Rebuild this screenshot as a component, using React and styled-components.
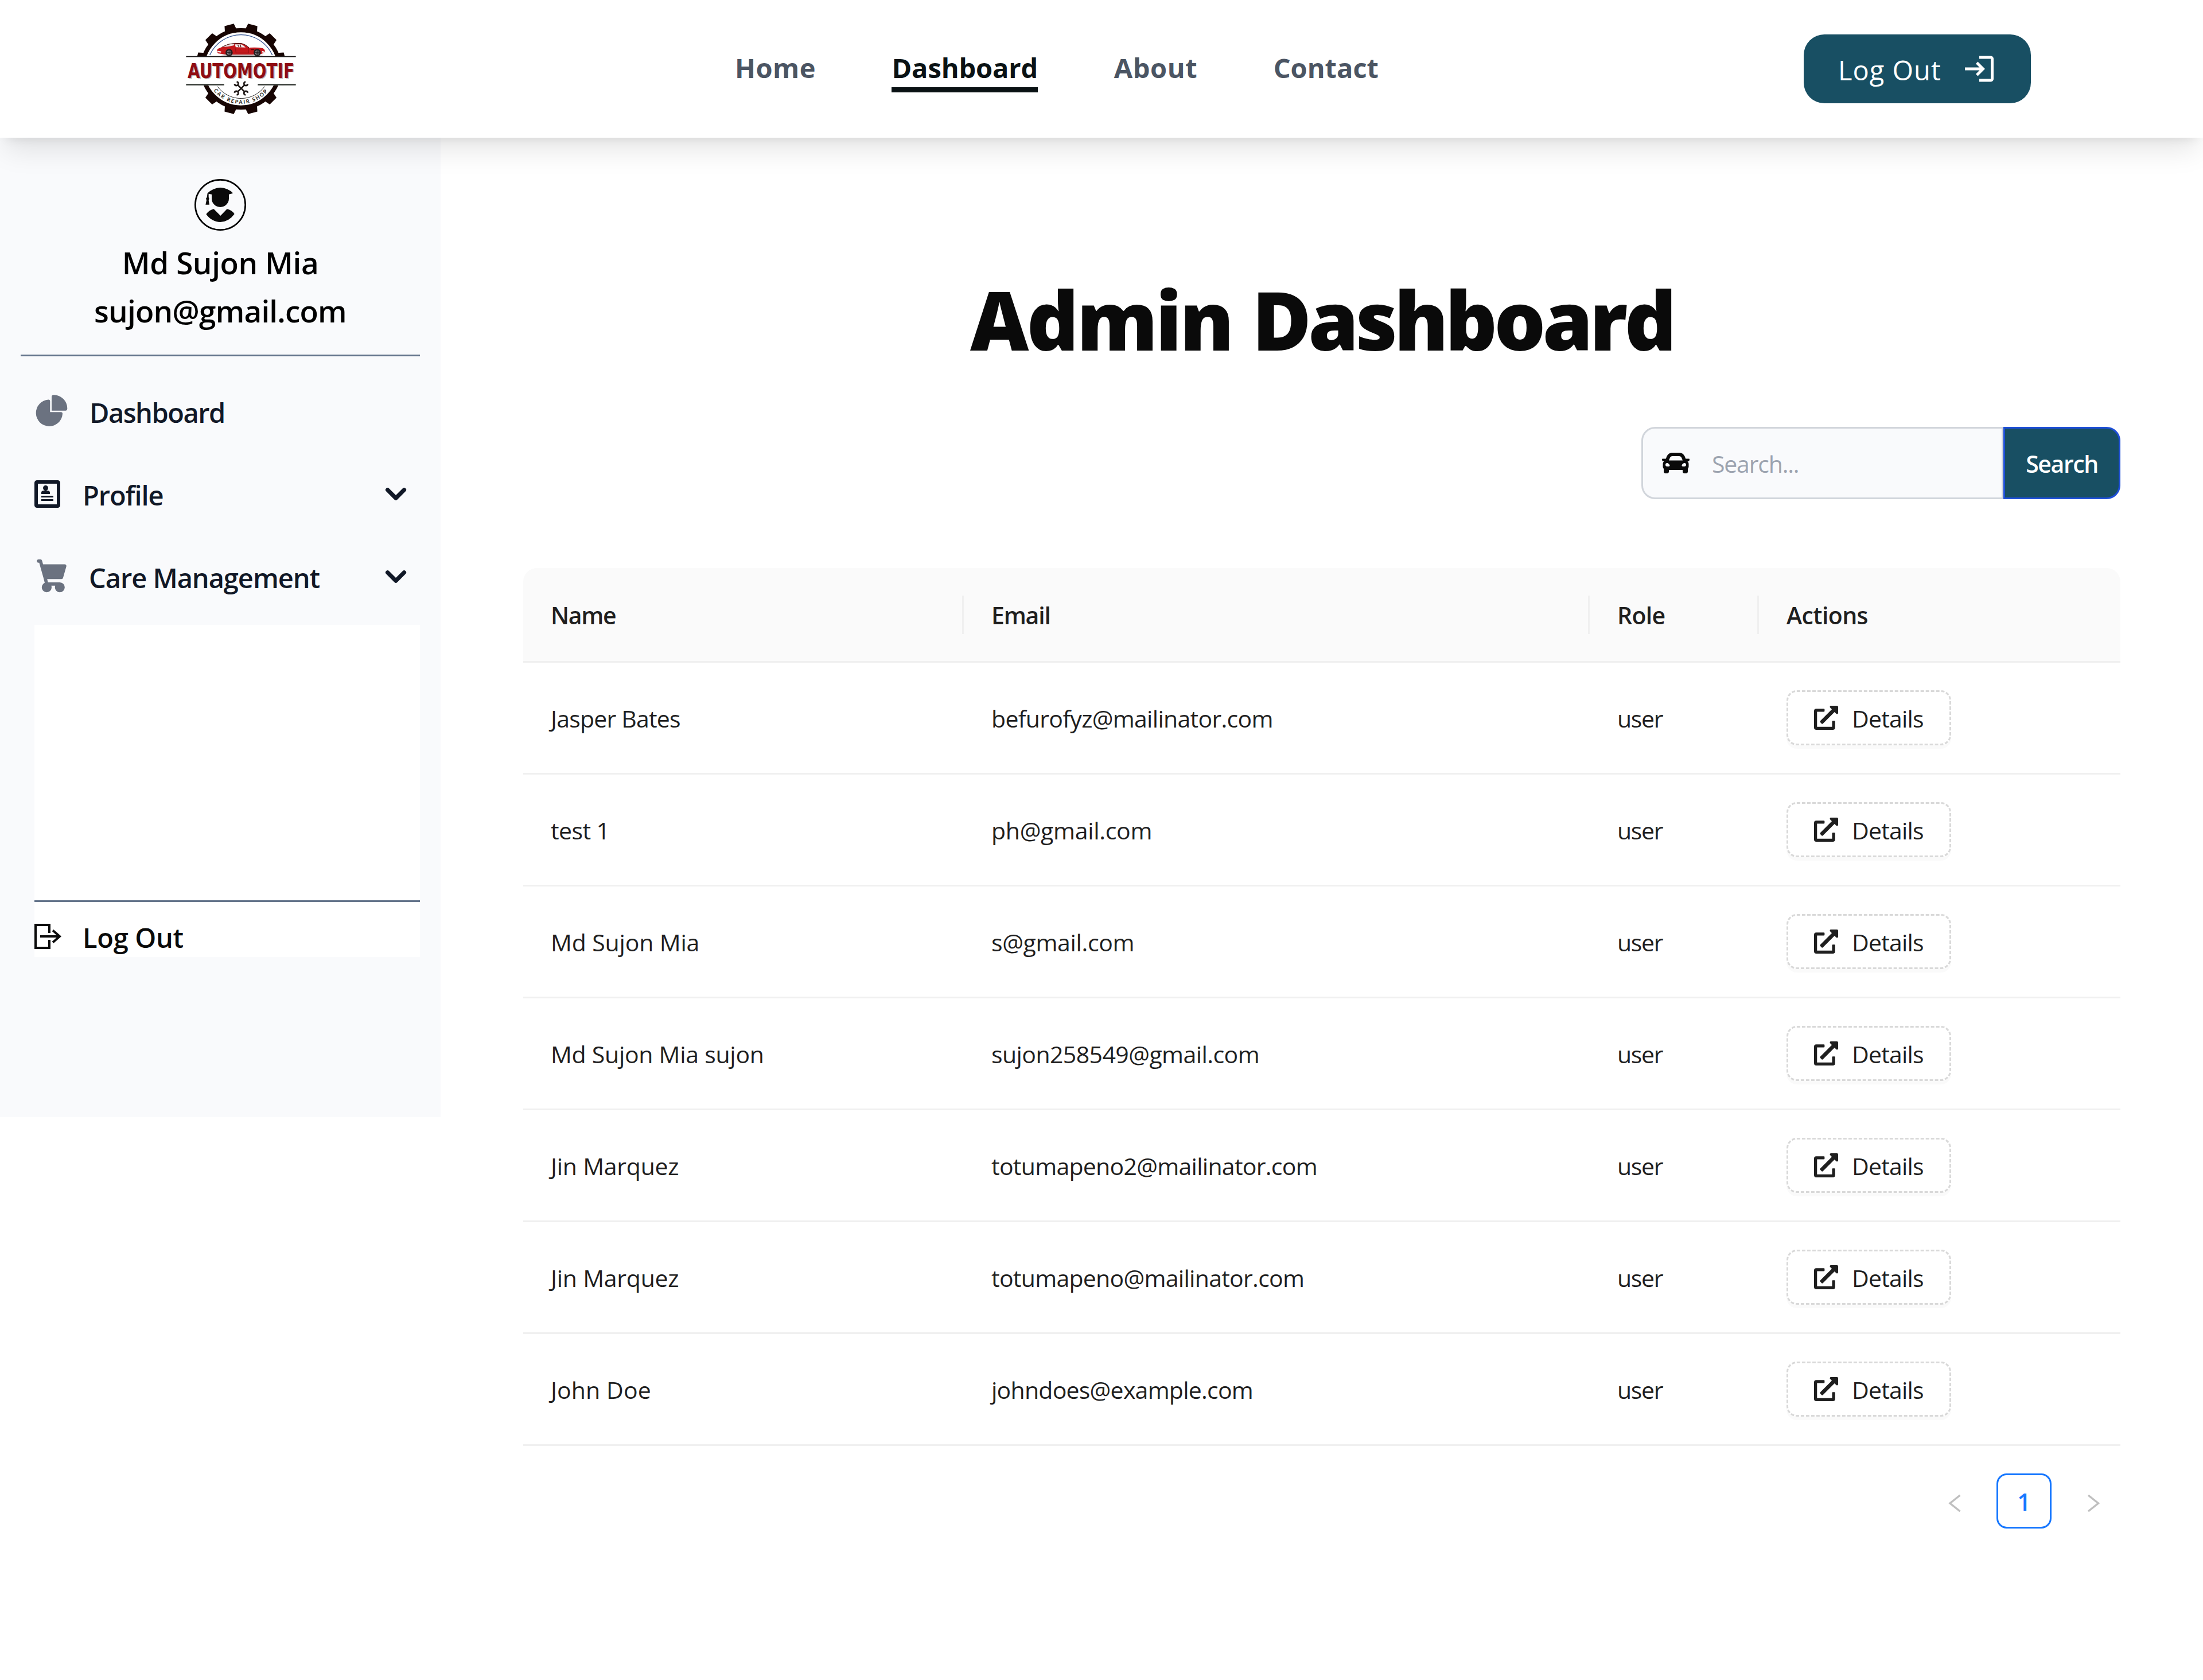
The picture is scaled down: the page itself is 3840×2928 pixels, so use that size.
import React from "react";
import styled, { createGlobalStyle } from "styled-components";
import { MdLogin } from "react-icons/md";
import { ImProfile } from "react-icons/im";
import { FaCar, FaExternalLinkAlt } from "react-icons/fa";

const GlobalStyle = createGlobalStyle`
  *, *::before, *::after { box-sizing: border-box; }
  body {
    margin: 0;
    background: #fff;
    color: #0a0a0a;
    font-family: "Open Sans", "Noto Sans", sans-serif;
  }
  svg { display: block; flex: none; }
`;

const Page = styled.div`
  width: 3840px;
  min-height: 2928px;
  background: #fff;
`;

const Header = styled.header`
  position: relative;
  z-index: 1;
  display: flex;
  align-items: center;
  justify-content: space-between;
  height: 240px;
  padding: 0 300px;
  background: #fff;
  box-shadow: 0 30px 45px -9px rgba(0, 0, 0, 0.1), 0 12px 18px -12px rgba(0, 0, 0, 0.1);
`;

const Nav = styled.nav`
  display: flex;
  justify-content: space-between;
  width: 1122px;
`;

const NavLink = styled.a`
  height: 82px;
  border-bottom: 9px solid ${(p) => (p.$active ? "#0a1214" : "transparent")};
  color: ${(p) => (p.$active ? "#0a1214" : "#4b5563")};
  font-size: 47px;
  font-weight: 700;
  line-height: 78px;
  letter-spacing: ${(p) => p.$ls}px;
`;

const LogoutButton = styled.button`
  display: flex;
  align-items: center;
  justify-content: space-between;
  width: 396px;
  height: 120px;
  padding: 0 60px;
  border: 0;
  border-radius: 36px;
  background: #184f63;
  color: #fff;
  font-family: inherit;
  font-size: 47px;
  letter-spacing: 1px;
  line-height: 72px;

  span { padding-top: 4px; }
`;

const Body = styled.div`
  display: flex;
  align-items: flex-start;
`;

const Sidebar = styled.aside`
  width: 768px;
  height: 1707px;
  padding: 72px 36px 0;
  background: #f9fafc;
`;

const UserCard = styled.div`
  display: flex;
  flex-direction: column;
  align-items: center;
  height: 309px;
  border-bottom: 3px solid #64748b;
`;

const UserLine = styled.div`
  margin-top: ${(p) => p.$top || 0}px;
  color: #000;
  font-size: 53px;
  font-weight: 600;
  line-height: 84px;
  letter-spacing: ${(p) => p.$ls}px;
`;

const Menu = styled.div`
  padding: 24px 0 12px 24px;
`;

const MenuItem = styled.div`
  display: flex;
  align-items: center;
  height: ${(p) => p.$height || 144}px;
  padding-right: 6px;
  color: ${(p) => p.$color || "#111827"};
  font-size: 47px;
  font-weight: 600;
  line-height: 72px;
`;

const MenuLabel = styled.span`
  flex: 1;
  padding-top: 4px;
  margin-left: ${(p) => p.$gap}px;
  letter-spacing: ${(p) => p.$ls}px;
`;

const BottomPanel = styled.div`
  margin-left: 24px;
  padding-top: 480px;
  background: #fff;
`;

const BottomInner = styled.div`
  padding-top: 24px;
  border-top: 3px solid #64748b;
`;

const Main = styled.main`
  flex: 1;
  padding: 244px 144px 0;
`;

const Title = styled.h1`
  margin: 0;
  padding-top: 1px;
  font-size: 141px;
  font-weight: 800;
  line-height: 143px;
  letter-spacing: -5.5px;
  word-spacing: 4px;
  text-align: center;
`;

const TitleLead = styled.span`
  letter-spacing: -3.6px;
`;

const SearchBar = styled.div`
  display: flex;
  width: 835px;
  height: 126px;
  margin: 116px 0 120px auto;
`;

const SearchField = styled.div`
  flex: 1;
  display: flex;
  align-items: center;
  padding-left: 33px;
  border: 3px solid #d1d5db;
  border-radius: 24px 0 0 24px;
  background: #f9fafc;
  color: #9ca3af;
  font-size: 41px;
  line-height: 60px;

  svg { color: #0a0a0a; }
  span { margin-left: 39px; padding-top: 1px; letter-spacing: -1.2px; }
`;

const SearchButton = styled.button`
  width: 204px;
  border: 3px solid #1d4ed8;
  border-radius: 0 24px 24px 0;
  padding: 1px 0 0;
  background: #184f63;
  color: #fff;
  font-family: inherit;
  font-size: 41px;
  font-weight: 600;
  line-height: 60px;
  letter-spacing: -1.4px;
`;

const Row = styled.div`
  display: grid;
  grid-template-columns: 768px 1091px 295px 1fr;
  align-items: center;
  height: 195px;
  border-bottom: 3px solid #f0f0f0;
  color: #1f1f1f;
  font-size: 41px;
  line-height: 66px;
`;

const HeadRow = styled(Row)`
  height: 165px;
  border-radius: 24px 24px 0 0;
  background: #fafafa;
  font-weight: 600;
`;

const Cell = styled.div`
  display: flex;
  align-items: center;
  justify-content: space-between;
  padding-left: 48px;
  letter-spacing: ${(p) => p.$ls || 0}px;
`;

const CellText = styled.span`
  padding-top: 2px;
`;

const Separator = styled.i`
  width: 3px;
  height: 67px;
  background: #f0f0f0;
`;

const DetailsButton = styled.button`
  display: flex;
  align-items: center;
  gap: 24px;
  width: 287px;
  height: 96px;
  padding: 0 0 0 45px;
  border: 3px dashed #d9d9d9;
  border-radius: 18px;
  background: #fff;
  box-shadow: 0 6px 0 rgba(0, 0, 0, 0.02);
  color: #1f1f1f;
  font-family: inherit;
  font-size: 41px;
  line-height: 66px;
  letter-spacing: -0.8px;
`;

const Pagination = styled.div`
  display: flex;
  justify-content: flex-end;
  gap: 24px;
  margin-top: 48px;
`;

const PageItem = styled.div`
  display: flex;
  align-items: center;
  justify-content: center;
  width: 96px;
  height: 96px;
  padding-top: 2px;
  border: 3px solid ${(p) => (p.$active ? "#1677ff" : "transparent")};
  border-radius: 18px;
  color: #1677ff;
  font-size: 41px;
  font-weight: 600;
`;

const teeth = Array.from({ length: 12 }, (_, i) => 15 + i * 30);

function Logo() {
  return (
    <svg width="240" height="200" viewBox="0 0 720 600">
      <defs>
        <clipPath id="gearTop"><rect x="0" y="0" width="720" height="234" /></clipPath>
        <clipPath id="gearBottom"><rect x="0" y="386" width="720" height="214" /></clipPath>
        <path id="shopArc" d="M217 414 A183 183 0 0 0 503 414" />
        <g id="gear">
          <circle cx="360" cy="300" r="202" fill="none" stroke="#170503" strokeWidth="22" />
          {teeth.map((a) => (
            <path key={a} d="M328 97 L335 62 H385 L392 97 Z" fill="#170503" transform={`rotate(${a} 360 300)`} />
          ))}
        </g>
      </defs>
      <use href="#gear" clipPath="url(#gearTop)" />
      <use href="#gear" clipPath="url(#gearBottom)" />
      <path d="M197 228 A179 179 0 0 1 524 228" fill="none" stroke="#2f4f8f" strokeWidth="4" />
      <path d="M73 236 H647" stroke="#1c1a1a" strokeWidth="5" />
      <path d="M73 383 H272 M448 383 H647" stroke="#1f241f" strokeWidth="6" />
      <path d="M237 392 A153 153 0 0 0 484 392" fill="none" stroke="#2a2a28" strokeWidth="3" />
      <ellipse cx="365" cy="228" rx="110" ry="4" fill="#b9b3b3" />
      <path
        d="M233 207 L238 196 L262 185 Q292 168 328 166 L364 167 Q384 172 402 189 Q448 186 474 192 Q486 198 487 214 L466 222 L420 225 H280 L240 219 Z"
        fill="#c4181c"
      />
      <path d="M258 186 Q290 170 326 168 L322 178 L290 184 Z" fill="#e9dede" />
      <path d="M328 172 L362 172 Q374 178 384 188 L333 187 Z" fill="#f1ecec" />
      <path d="M343 174 L350 186 M356 173 L360 187" stroke="#4a1512" strokeWidth="4" />
      <path d="M262 185 Q292 168 328 166 L364 167 Q384 172 402 189" fill="none" stroke="#3a0d0c" strokeWidth="3" />
      <path d="M330 190 L334 217 H400 V190" fill="none" stroke="#7d0f12" strokeWidth="2" />
      <path d="M412 196 H430 V202 H412 Z" fill="#5a0b0d" />
      <path d="M236 209 L256 212 M470 210 L487 214" stroke="#f2e6e6" strokeWidth="7" />
      {[298, 445].map((x) => (
        <g key={x}>
          <circle cx={x} cy="215" r="19" fill="#231c1e" />
          <circle cx={x} cy="215" r="11" fill="#8d8b90" />
          <path d={`M${x - 10} 215 H${x + 10} M${x} 205 V225 M${x - 7} 208 L${x + 7} 222 M${x + 7} 208 L${x - 7} 222`} stroke="#231c1e" strokeWidth="3" />
        </g>
      ))}
      {[["#b5aeae", 5, 4], ["#8f0c13", 0, 0]].map(([fill, dx, dy]) => (
        <text
          key={fill}
          transform={`translate(${81 + dx} ${348 + dy}) scale(1 1.42)`}
          textLength="558"
          lengthAdjust="spacingAndGlyphs"
          fontFamily="DejaVu Sans Condensed, DejaVu Sans, sans-serif"
          fontWeight="700"
          fontStretch="condensed"
          fontSize="75"
          fill={fill}
        >
          AUTOMOTIF
        </text>
      ))}
      {[-45, 45].map((a) => (
        <path
          key={a}
          transform={`translate(361 402) rotate(${a})`}
          d="M0 -25 V25 M-8 -41 A10 10 0 1 0 8 -41 M-8 41 A10 10 0 1 1 8 41"
          fill="none"
          stroke="#1d1715"
          strokeWidth="8"
        />
      ))}
      <text fontFamily="Lato, sans-serif" fontWeight="700" fontSize="27" fill="#1d1715">
        <textPath href="#shopArc" textLength="322" lengthAdjust="spacing">CAR REPAIR SHOP</textPath>
      </text>
    </svg>
  );
}

function Avatar() {
  return (
    <svg width="90" height="90" viewBox="27 24 270 270" fill="#0a0a0a">
      <circle cx="162" cy="159" r="131" fill="none" stroke="#000" strokeWidth="8" />
      <path d="M117 104 V126 A45 45 0 0 0 207 126 V104 Z" />
      <path d="M95 98 Q124 71 162 69 Q202 71 229 98 L205 105 H119 L101 101 V119 L104 128 L101 134 L105 158 H85 L90 134 L87 127 L92 119 Z" />
      <path d="M88 208 Q104 186 128 181 L163 216 L197 181 Q224 187 236 207 Q206 248 162 249 Q116 248 88 208 Z" />
    </svg>
  );
}

const PieIcon = () => (
  <svg width="60" height="60" viewBox="0 0 22 21" fill="#6b7280">
    <path d="M16.975 11H10V4.025a1 1 0 0 0-1.066-.998 8.5 8.5 0 1 0 9.039 9.039.999.999 0 0 0-1-1.066h.002Z" />
    <path d="M12.5 0c-.157 0-.311.01-.565.027A1 1 0 0 0 11 1.02V10h8.975a1 1 0 0 0 1-.935c.013-.188.028-.374.028-.565A8.51 8.51 0 0 0 12.5 0Z" />
  </svg>
);

const CartIcon = () => (
  <svg width="60" height="60" viewBox="0 0 18 21" fill="#6b7280">
    <path d="M15 12a1 1 0 0 0 .962-.726l2-7A1 1 0 0 0 17 3H3.77L3.175.745A1 1 0 0 0 2.208 0H1a1 1 0 0 0 0 2h.438l.6 2.255v.019l2 7 .746 2.986A3 3 0 1 0 9 17a2.966 2.966 0 0 0-.184-1h2.368c-.118.32-.18.659-.184 1a3 3 0 1 0 3-3H6.78l-.5-2H15Z" />
  </svg>
);

const ChevronIcon = () => (
  <svg width="72" height="72" viewBox="0 0 20 20" fill="currentColor">
    <path
      fillRule="evenodd"
      clipRule="evenodd"
      d="M5.293 7.293a1 1 0 011.414 0L10 10.586l3.293-3.293a1 1 0 111.414 1.414l-4 4a1 1 0 01-1.414 0l-4-4a1 1 0 010-1.414z"
    />
  </svg>
);

const ExitIcon = () => (
  <svg width="48" height="48" viewBox="0 0 48 48" fill="none" stroke="currentColor" strokeWidth="4">
    <path d="M26 18 V4 H2 V44 H26 V30" />
    <path d="M10 24 H44 M32 13.5 L44 24 L32 34.5" />
  </svg>
);

const PageArrow = ({ next }) => (
  <svg width="26" height="38" viewBox="0 0 26 38" fill="none" stroke="#bfbfbf" strokeWidth="3.4">
    <path d={next ? "M5 8 L22.5 22 L5 36" : "M21.5 8 L4 22 L21.5 36"} />
  </svg>
);

const navItems = [
  { label: "Home", ls: 0.5 },
  { label: "Dashboard", ls: -0.1, active: true },
  { label: "About", ls: 0.6 },
  { label: "Contact", ls: 0 },
];

const users = [
  { name: "Jasper Bates", nameLs: -0.8, email: "befurofyz@mailinator.com", emailLs: -0.7 },
  { name: "test 1", nameLs: -0.6, email: "ph@gmail.com", emailLs: -0.3 },
  { name: "Md Sujon Mia", nameLs: -0.15, email: "s@gmail.com", emailLs: -0.35 },
  { name: "Md Sujon Mia sujon", nameLs: -0.27, email: "sujon258549@gmail.com", emailLs: -0.57 },
  { name: "Jin Marquez", nameLs: -0.25, email: "totumapeno2@mailinator.com", emailLs: -0.72 },
  { name: "Jin Marquez", nameLs: -0.25, email: "totumapeno@mailinator.com", emailLs: -0.72 },
  { name: "John Doe", nameLs: 0.1, email: "johndoes@example.com", emailLs: -0.75 },
];

export default function App() {
  return (
    <Page>
      <GlobalStyle />
      <Header>
        <Logo />
        <Nav>
          {navItems.map((n) => (
            <NavLink key={n.label} $active={n.active} $ls={n.ls}>{n.label}</NavLink>
          ))}
        </Nav>
        <LogoutButton>
          <span>Log Out</span>
          <MdLogin size={60} />
        </LogoutButton>
      </Header>
      <Body>
        <Sidebar>
          <UserCard>
            <Avatar />
            <UserLine $top={14} $ls={-0.4}>Md Sujon Mia</UserLine>
            <UserLine $ls={-0.8}>sujon@gmail.com</UserLine>
          </UserCard>
          <Menu>
            <MenuItem>
              <PieIcon />
              <MenuLabel $gap={36} $ls={-1.5}>Dashboard</MenuLabel>
            </MenuItem>
            <MenuItem>
              <ImProfile size={48} />
              <MenuLabel $gap={36} $ls={-1.1}>Profile</MenuLabel>
              <ChevronIcon />
            </MenuItem>
            <MenuItem>
              <CartIcon />
              <MenuLabel $gap={35} $ls={-1.05}>Care Management</MenuLabel>
              <ChevronIcon />
            </MenuItem>
          </Menu>
          <BottomPanel>
            <BottomInner>
              <MenuItem $height={72} $color="#0a0a0a">
                <ExitIcon />
                <MenuLabel $gap={36} $ls={-0.3}>Log Out</MenuLabel>
              </MenuItem>
            </BottomInner>
          </BottomPanel>
        </Sidebar>
        <Main>
          <Title><TitleLead>Admin</TitleLead> Dashboard</Title>
          <SearchBar>
            <SearchField>
              <FaCar size={48} />
              <span>Search...</span>
            </SearchField>
            <SearchButton>Search</SearchButton>
          </SearchBar>
          <HeadRow>
            <Cell $ls={-1.3}><CellText>Name</CellText><Separator /></Cell>
            <Cell $ls={-1.2}><CellText>Email</CellText><Separator /></Cell>
            <Cell $ls={-0.7}><CellText>Role</CellText><Separator /></Cell>
            <Cell $ls={-0.6}><CellText>Actions</CellText></Cell>
          </HeadRow>
          {users.map((u) => (
            <Row key={u.email}>
              <Cell $ls={u.nameLs}><CellText>{u.name}</CellText></Cell>
              <Cell $ls={u.emailLs}><CellText>{u.email}</CellText></Cell>
              <Cell $ls={-1.3}><CellText>user</CellText></Cell>
              <Cell>
                <DetailsButton>
                  <FaExternalLinkAlt size={42} />
                  <CellText>Details</CellText>
                </DetailsButton>
              </Cell>
            </Row>
          ))}
          <Pagination>
            <PageItem><PageArrow /></PageItem>
            <PageItem $active>1</PageItem>
            <PageItem><PageArrow next /></PageItem>
          </Pagination>
        </Main>
      </Body>
    </Page>
  );
}
